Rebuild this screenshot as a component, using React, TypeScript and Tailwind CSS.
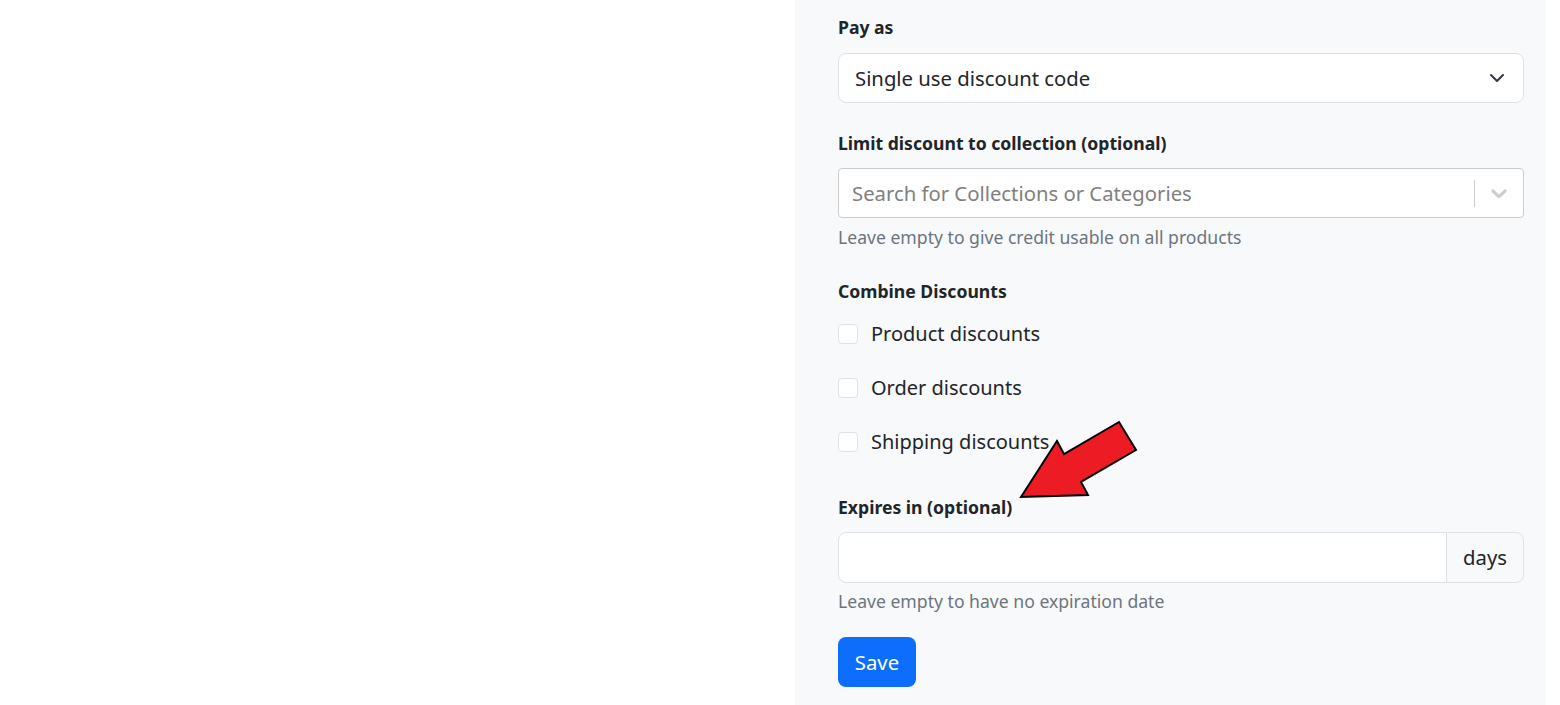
import React from "react";

const font = { fontFamily: '"Noto Sans", "Open Sans", sans-serif' };

function Checkbox({ label }: { label: string }) {
  return (
    <div className="flex items-center h-[30px] mb-[24px]">
      <span className="w-[20px] h-[20px] bg-white border border-[#dee2e6] rounded-[4px] shrink-0" />
      <span className="ml-[13px] text-[20px] leading-[30px] text-[#212529]">{label}</span>
    </div>
  );
}

export default function App() {
  return (
    <div className="w-[1560px] h-[705px] bg-white flex overflow-hidden" style={font}>
      <div className="w-[795px] shrink-0 bg-white" />
      <div className="w-[751px] shrink-0 bg-[#f8f9fa] pl-[43px] pr-[22px] pt-[15px] relative">
        <div className="text-[17.6px] leading-[24px] font-bold text-[#212529] mb-[14px]">Pay as</div>
        <div className="h-[50px] bg-white border border-[#dee2e6] rounded-[8px] flex items-center pl-[16px] pr-[18px]">
          <span className="flex-1 text-[20.3px] leading-[30px] text-[#212529]">Single use discount code</span>
          <svg width="16" height="16" viewBox="0 0 16 16" fill="none">
            <path d="M2 5l6 6 6-6" stroke="#343a40" strokeWidth="2" strokeLinecap="round" strokeLinejoin="round" />
          </svg>
        </div>

        <div className="text-[17.6px] leading-[24px] font-bold text-[#212529] mt-[28px] mb-[13px]">
          Limit discount to collection (optional)
        </div>
        <div className="h-[50px] bg-white border border-[#cccccc] rounded-[4px] flex items-center pl-[13px]">
          <span className="flex-1 text-[20.3px] leading-[30px] text-[#808080]">Search for Collections or Categories</span>
          <span className="w-px h-[27px] bg-[#cccccc]" />
          <span className="w-[48px] flex items-center justify-center">
            <svg width="26" height="26" viewBox="0 0 20 20" fill="#cccccc">
              <path d="M4.516 7.548c0.436-0.446 1.043-0.481 1.576 0l3.908 3.747 3.908-3.747c0.533-0.481 1.141-0.446 1.574 0 0.436 0.445 0.408 1.197 0 1.615-0.406 0.418-4.695 4.502-4.695 4.502-0.217 0.223-0.502 0.335-0.787 0.335s-0.57-0.112-0.789-0.335c0 0-4.287-4.084-4.695-4.502s-0.436-1.17 0-1.615z" />
            </svg>
          </span>
        </div>
        <div className="text-[17.6px] leading-[24px] text-[#6c757d] mt-[7px]">Leave empty to give credit usable on all products</div>

        <div className="text-[17.6px] leading-[24px] font-bold text-[#212529] mt-[30px] mb-[16px]">Combine Discounts</div>
        <Checkbox label="Product discounts" />
        <Checkbox label="Order discounts" />
        <Checkbox label="Shipping discounts" />

        <div className="text-[17.6px] leading-[24px] font-bold text-[#212529] mt-[38px] mb-[13px]">Expires in (optional)</div>
        <div className="h-[51px] flex">
          <div className="flex-1 bg-white border border-[#dee2e6] rounded-l-[8px]" />
          <div className="w-[78px] -ml-px bg-[#f8f9fa] border border-[#dee2e6] rounded-r-[8px] flex items-center justify-center text-[20.3px] text-[#212529]">
            days
          </div>
        </div>
        <div className="text-[17.6px] leading-[24px] text-[#6c757d] mt-[6px]">Leave empty to have no expiration date</div>

        <button className="mt-[24px] h-[50px] w-[78px] bg-[#0d6efd] text-white text-[20.3px] rounded-[8px] flex items-center justify-center">
          Save
        </button>

        <svg className="absolute left-0 top-0 pointer-events-none" width="751" height="705" viewBox="795 0 751 705">
          <polygon
            points="1021,497 1057,441 1064,454 1119,422 1136,450 1081,482 1088,495"
            fill="#ed1c24"
            stroke="#000"
            strokeWidth="2"
            strokeLinejoin="miter"
          />
        </svg>
      </div>
      <div className="flex-1 bg-white" />
    </div>
  );
}
